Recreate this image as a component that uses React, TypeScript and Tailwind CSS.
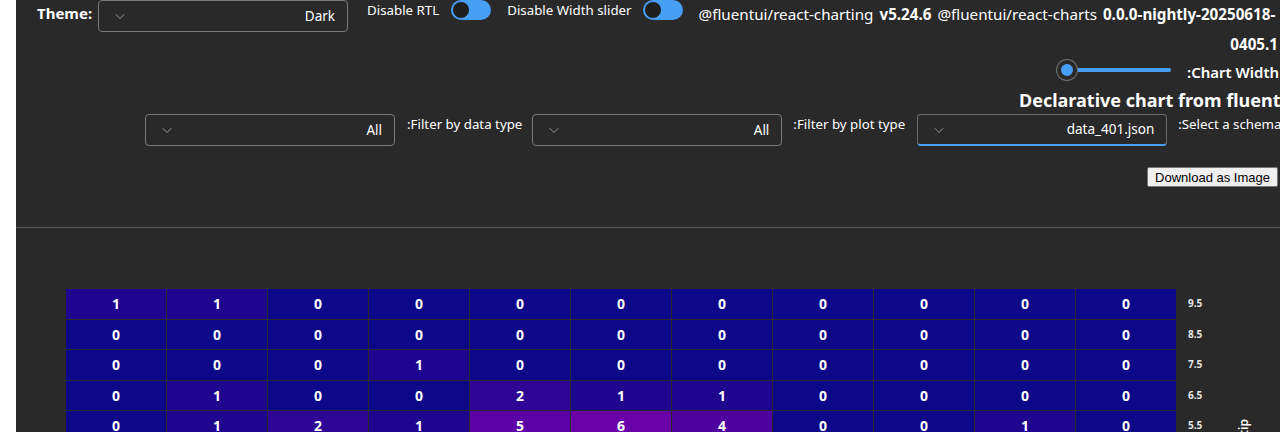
import React from "react";

const rows: { label: string; values: number[] }[] = [
  { label: "9.5", values: [1, 1, 0, 0, 0, 0, 0, 0, 0, 0, 0] },
  { label: "8.5", values: [0, 0, 0, 0, 0, 0, 0, 0, 0, 0, 0] },
  { label: "7.5", values: [0, 0, 0, 1, 0, 0, 0, 0, 0, 0, 0] },
  { label: "6.5", values: [0, 1, 0, 0, 2, 1, 1, 0, 0, 0, 0] },
  { label: "5.5", values: [0, 1, 2, 1, 5, 6, 4, 0, 0, 1, 0] },
];

// plasma-ish colors for the counts in view
const cellColor: Record<number, string> = {
  0: "bg-[#0d0887]",
  1: "bg-[#1f068f]",
  2: "bg-[#2f0596]",
  4: "bg-[#4e03a1]",
  5: "bg-[#5c01a5]",
  6: "bg-[#6a00a8]",
};

function Chevron() {
  return (
    <svg className="w-3 h-3" viewBox="0 0 12 12" fill="none">
      <path d="M2 4.5l4 4 4-4" stroke="#9a9a9a" strokeWidth="1" strokeLinecap="round" strokeLinejoin="round" />
    </svg>
  );
}

function Dropdown({ value, focused = false }: { value: string; focused?: boolean }) {
  return (
    <div
      className={
        focused
          ? "flex items-center justify-between w-[250px] h-[32px] shrink-0 rounded border border-[#6b6b6b] border-b-2 border-b-[#479ef5] pl-[15px] pr-3"
          : "flex items-center justify-between w-[250px] h-[32px] shrink-0 rounded border border-[#7a7a7a] pl-[15px] pr-3"
      }
    >
      <Chevron />
      <span className="text-[13.5px] text-white">{value}</span>
    </div>
  );
}

function Toggle() {
  return (
    <div className="flex items-center w-10 h-5 shrink-0 rounded-full bg-[#479ef5] px-[2px]">
      <div className="w-4 h-4 rounded-full bg-[#1f1f1f]" />
    </div>
  );
}

export default function App() {
  return (
    <div
      className="w-[1280px] h-[432px] overflow-hidden bg-white"
      style={{ fontFamily: '"Noto Sans", "Open Sans", sans-serif' }}
    >
      <div className="ml-4 h-full bg-[#292929] text-white overflow-hidden">
        {/* controls */}
        <div className="h-[227px] whitespace-nowrap">
          <div className="flex items-start h-[32px]">
            <span className="ml-[21px] mt-[2px] w-[53px] text-[15px] font-bold">Theme:</span>
            <div className="ml-2">
              <Dropdown value="Dark" />
            </div>
            <span className="ml-[19px] mt-[1px] text-[13.3px]">Disable RTL</span>
            <div className="ml-3">
              <Toggle />
            </div>
            <span className="ml-4 mt-[1px] text-[13.3px]">Disable Width slider</span>
            <div className="ml-[11px]">
              <Toggle />
            </div>
            <div className="ml-4 mt-[3px] flex gap-[6px] text-[15.2px]">
              <span>@fluentui/react-charting</span>
              <span className="font-bold">v5.24.6</span>
              <span>@fluentui/react-charts</span>
              <span className="font-bold">0.0.0-nightly-20250618-</span>
            </div>
          </div>
          <div className="flex justify-end pr-[2px] pt-[1px] text-[15.2px] font-bold h-[26px]">0405.1</div>
          <div className="flex items-center h-[24px]">
            <div className="ml-[1041px] relative w-[120px] h-5 flex items-center">
              <div className="ml-[10px] h-1 w-[104px] rounded-full bg-[#479ef5]" />
              <div className="absolute left-0 top-0 w-5 h-5 rounded-full bg-[#479ef5] border-[4px] border-[#292929] ring-1 ring-[#6e6e6e]" />
            </div>
            <span className="ml-[10px] mt-1 text-[15px] font-semibold">:Chart Width</span>
          </div>
          <div className="ml-[1003px] mt-[6px] h-[24px] text-[18px] font-bold leading-[24px]">Declarative chart from fluentui</div>
          <div className="flex items-start mt-[2px]">
            <div className="ml-[129px]">
              <Dropdown value="All" />
            </div>
            <span className="ml-3 mt-[1px] text-[13.3px]">:Filter by data type</span>
            <div className="ml-[10px]">
              <Dropdown value="All" />
            </div>
            <span className="ml-[11px] mt-[1px] text-[13.3px]">:Filter by plot type</span>
            <div className="ml-[12px]">
              <Dropdown value="data_401.json" focused />
            </div>
            <span className="ml-[11px] mt-[1px] text-[13.3px]">:Select a schema</span>
          </div>
          <div className="flex justify-end pr-[2px] mt-[21px]">
            <button
              className="h-5 px-[7px] rounded-[2px] border border-[#767676] bg-[#efefef] text-[13px] leading-none text-black"
              style={{ fontFamily: '"Liberation Sans", Arial, sans-serif' }}
            >
              Download as Image
            </button>
          </div>
        </div>
        <div className="-ml-4 h-px bg-[#5a5a5a]" />

        {/* heatmap */}
        <div className="flex mt-[61px]">
          <div className="ml-[50px] w-[1110px] grid grid-cols-11 gap-x-px gap-y-px">
            {rows.map((r) =>
              r.values.map((v, i) => (
                <div
                  key={r.label + i}
                  className={`h-[29.5px] flex items-center justify-center text-[14px] font-bold ${cellColor[v]}`}
                >
                  {v}
                </div>
              ))
            )}
          </div>
          <div className="ml-3 flex flex-col gap-y-px">
            {rows.map((r) => (
              <div key={r.label} className="h-[29.5px] flex items-center text-[10px] font-bold text-[#e6e6e6]">
                {r.label}
              </div>
            ))}
          </div>
          <div className="ml-[34px] flex items-end">
            <span className="mb-[5px] -rotate-90 text-[12px] font-semibold">tip</span>
          </div>
        </div>
      </div>
    </div>
  );
}
